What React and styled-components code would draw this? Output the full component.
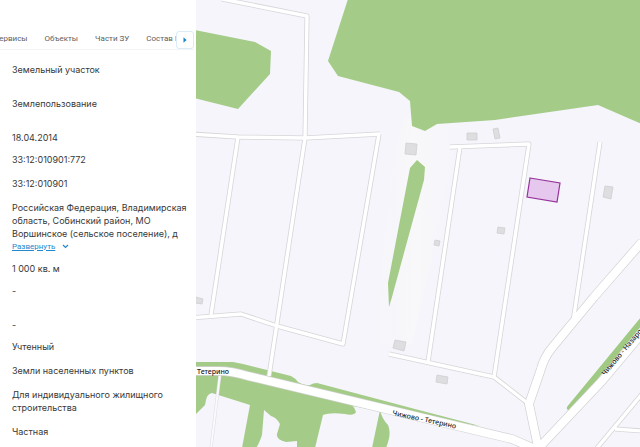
import React from 'react';
import styled, { createGlobalStyle } from 'styled-components';

const GlobalStyle = createGlobalStyle`
    body {
        margin: 0;
        background: #fff;
        color: #383838;
        font-family: Inter, 'Noto Sans', sans-serif;
    }
`;

const tabs = ['Сервисы', 'Объекты', 'Части ЗУ', 'Состав ЕЗП'];

const rows = [
    { text: 'Земельный участок', space: 'large' },
    { text: 'Землепользование', space: 'large' },
    { text: '18.04.2014', space: 'small' },
    { text: '33:12:010901:772' },
    { text: '33:12:010901' },
    {
        text: 'Российская Федерация, Владимирская область, Собинский район, МО Воршинское (сельское поселение), д',
        space: 'small',
        expandable: true,
    },
    { text: '1 000 кв. м', space: 'small' },
    { text: '-', space: 'large' },
    { text: '-', space: 'small' },
    { text: 'Учтенный' },
    { text: 'Земли населенных пунктов' },
    { text: 'Для индивидуального жилищного строительства' },
    { text: 'Частная' },
];

const minorRoads = [
    'M222 -1 L307 16 L305 138 L269 376',
    'M190 134 L238 137 L305 138 L380 134',
    'M238 137 L211 315',
    'M379 134 L343 344 L277 326 L241 314 L190 318',
    'M450 147 L529 144 L494 377',
    'M460 147 L428 362',
    'M600 142 L573 322',
    'M389 354 L494 377 L530 405',
    'M597 448 L642 394',
    'M615 429 L642 431',
];

const mainRoads = [
    'M190 371 L218 371 Q232 371 248 376 L415 416 L512 439 L542 452',
    'M642 242 L594 297 L551 349 Q544 358 541 369 L529 404 L538 447',
    'M534 453 L602 381 L644 331',
];

const buildings = [
    '406,143 417,144 416,155 405,154',
    '467,133 477,133 477,140 467,140',
    '493,129 498,128 500,138 495,139',
    '605,186 613,187 611,199 603,197',
    '498,227 505,228 504,234 497,233',
    '435,240 440,241 439,246 434,245',
    '196,297 203,299 202,304 195,303',
    '395,340 406,342 404,351 393,348',
    '437,375 448,377 447,384 436,382',
];

function RoadMap() {
    return (
        <MapView viewBox='196 0 444 447' preserveAspectRatio='xMinYMin slice' role='img' aria-label='Карта'>
            <defs>
                <linearGradient id='clearing'>
                    <stop offset='0' stopColor='#f5f5fb' />
                    <stop offset='0.5' stopColor='#f8f8fa' />
                    <stop offset='1' stopColor='#f5f5fb' />
                </linearGradient>
            </defs>
            <rect x='196' width='444' height='447' fill='#f5f5fb' />
            <path d='M405 118 L455 118 L455 150 L436 240 L412 345 L375 345 L383 250 L395 150 Z' fill='url(#clearing)' />
            <g fill='#a4cc88'>
                <path d='M190 29 L255 42 L271 51 L270 74 L238 109 L190 97 Z' />
                <path d='M348 -1 L328 61 L338 76 L399 92 L410 101 L412 126 L425 131 L437 124 L495 120 L598 105 L642 124 V-1 Z' />
                <path d='M417 160 L425 167 L424 180 L413 220 L392 297 L389 307 L388 283 L400 220 L410 168 Z' />
                <path d='M190 362 H233 L243 364 L291 376 Q295 378 298 382 Q304 386 310 385 Q313 383 317 383 L415 409 L480 426 L400 415 L190 375 Z' />
                <path d='M190 370 L235 373 L340 397 Q355 405 356 412 Q354 416 345 414 Q330 412 323 415 L315 448 H297 V441 L286 442 Q276 440 277 434 L280 424 Q276 417 271 416 L264 410 L262 435 Q259 444 256 448 H242 L250 405 L212 393 Q207 394 206 400 L205 405 L190 420 Z' />
                <path d='M380 410 Q382 419 388 425 Q392 433 386 448 H372 Z' />
            </g>
            <path d='M570 408 L644 318' stroke='#a0ca84' strokeWidth='6' strokeLinecap='round' />
            <path d='M220 374 L211 448' fill='none' stroke='#dddde4' strokeWidth='3' />
            <path d='M220 374 L211 448' fill='none' stroke='#fafafc' strokeWidth='2' />
            <g fill='none' strokeLinejoin='round'>
                {minorRoads.map(d => <path key={d} d={d} stroke='#d6d6d9' strokeWidth='5' />)}
                {mainRoads.map(d => <path key={d} d={d} stroke='#d2d2d2' strokeWidth='9.4' />)}
                {minorRoads.map(d => <path key={d} d={d} stroke='#fff' strokeWidth='3.4' />)}
                {mainRoads.map(d => <path key={d} d={d} stroke='#fff' strokeWidth='8' />)}
            </g>
            <g fill='#dedee0' stroke='#cfcfd2' strokeWidth='0.8'>
                {buildings.map(points => <polygon key={points} points={points} />)}
            </g>
            <polygon points='530,178 560,183 557,202 527,197' fill='#e6c8ef' stroke='#96329b' strokeWidth='1.2' />
            <RoadLabel x='197' y='374'>Тетерино</RoadLabel>
            <RoadLabel transform='translate(392 415) rotate(12)'>Чижово - Тетерино</RoadLabel>
            <RoadLabel transform='translate(605 376) rotate(-50)'>Чижово - Назарово</RoadLabel>
        </MapView>
    );
}

export default function App() {
    return (
        <Page>
            <GlobalStyle />
            <Panel>
                <TabBar>
                    <TabList>
                        {tabs.map(tab => <Tab key={tab} type='button'>{tab}</Tab>)}
                    </TabList>
                    <NextButton type='button' aria-label='Вперёд'>
                        <svg width='4' height='6' viewBox='0 0 4 6'>
                            <path d='M0.5 0.3 L3.6 3 L0.5 5.7 Z' fill='#1686cf' />
                        </svg>
                    </NextButton>
                </TabBar>
                <Details>
                    {rows.map((row, i) => (
                        <Row key={i} $space={row.space}>
                            {row.text}
                            {row.expandable && (
                                <ExpandLink href='#address'>
                                    <span>Развернуть</span>
                                    <svg width='7' height='5' viewBox='0 0 7 5'>
                                        <path d='M1 1 L3.5 3.5 L6 1' fill='none' stroke='#2488cc' strokeWidth='1.2' />
                                    </svg>
                                </ExpandLink>
                            )}
                        </Row>
                    ))}
                </Details>
            </Panel>
            <MapArea>
                <RoadMap />
            </MapArea>
        </Page>
    );
}

// styles
const Page = styled.div`
    display: flex;
    height: 100vh;
    overflow: hidden;
`;

const Panel = styled.aside`
    flex: 0 0 196px;
    box-sizing: border-box;
    padding-top: 28px;
    overflow: hidden;
`;

const TabBar = styled.nav`
    position: relative;
    height: 22px;
    margin-right: 2px;
    overflow: hidden;
    border-bottom: 1px solid #f4f4f6;
    box-sizing: border-box;
`;

const TabList = styled.div`
    display: flex;
    gap: 17px;
    height: 100%;
    margin-left: -6px;
`;

const Tab = styled.button`
    flex: none;
    padding: 0;
    border: none;
    background: none;
    color: #606060;
    font-family: Roboto, sans-serif;
    font-size: 8px;
    line-height: 20px;
`;

const NextButton = styled.button`
    position: absolute;
    top: 3px;
    right: 0;
    display: flex;
    align-items: center;
    justify-content: center;
    width: 18px;
    height: 18px;
    padding: 0;
    border: 1px solid #dcebf8;
    border-radius: 3px;
    background: #fff;
`;

const spaces = { small: '9px', large: '21px' };

const Row = styled.li`
    padding-bottom: ${props => spaces[props.$space] || '11px'};
`;

const Details = styled.ul`
    margin: 0;
    padding: 13px 8px 0 12px;
    list-style: none;
    font-size: 9px;
    line-height: 13px;
`;

const ExpandLink = styled.a`
    display: flex;
    align-items: center;
    gap: 7px;
    color: #2488cc;
    font-family: Roboto, sans-serif;
    font-size: 8px;
    line-height: 13px;
    text-decoration: none;
    span {
        text-decoration: underline;
    }
`;

const MapArea = styled.main`
    flex: 1;
    min-width: 0;
    background: #f5f5fb;
`;

const MapView = styled.svg`
    display: block;
    width: 100%;
    height: 100%;
`;

const RoadLabel = styled.text`
    fill: #222;
    font-family: 'Noto Sans', sans-serif;
    font-size: 7px;
    font-weight: 500;
`;
